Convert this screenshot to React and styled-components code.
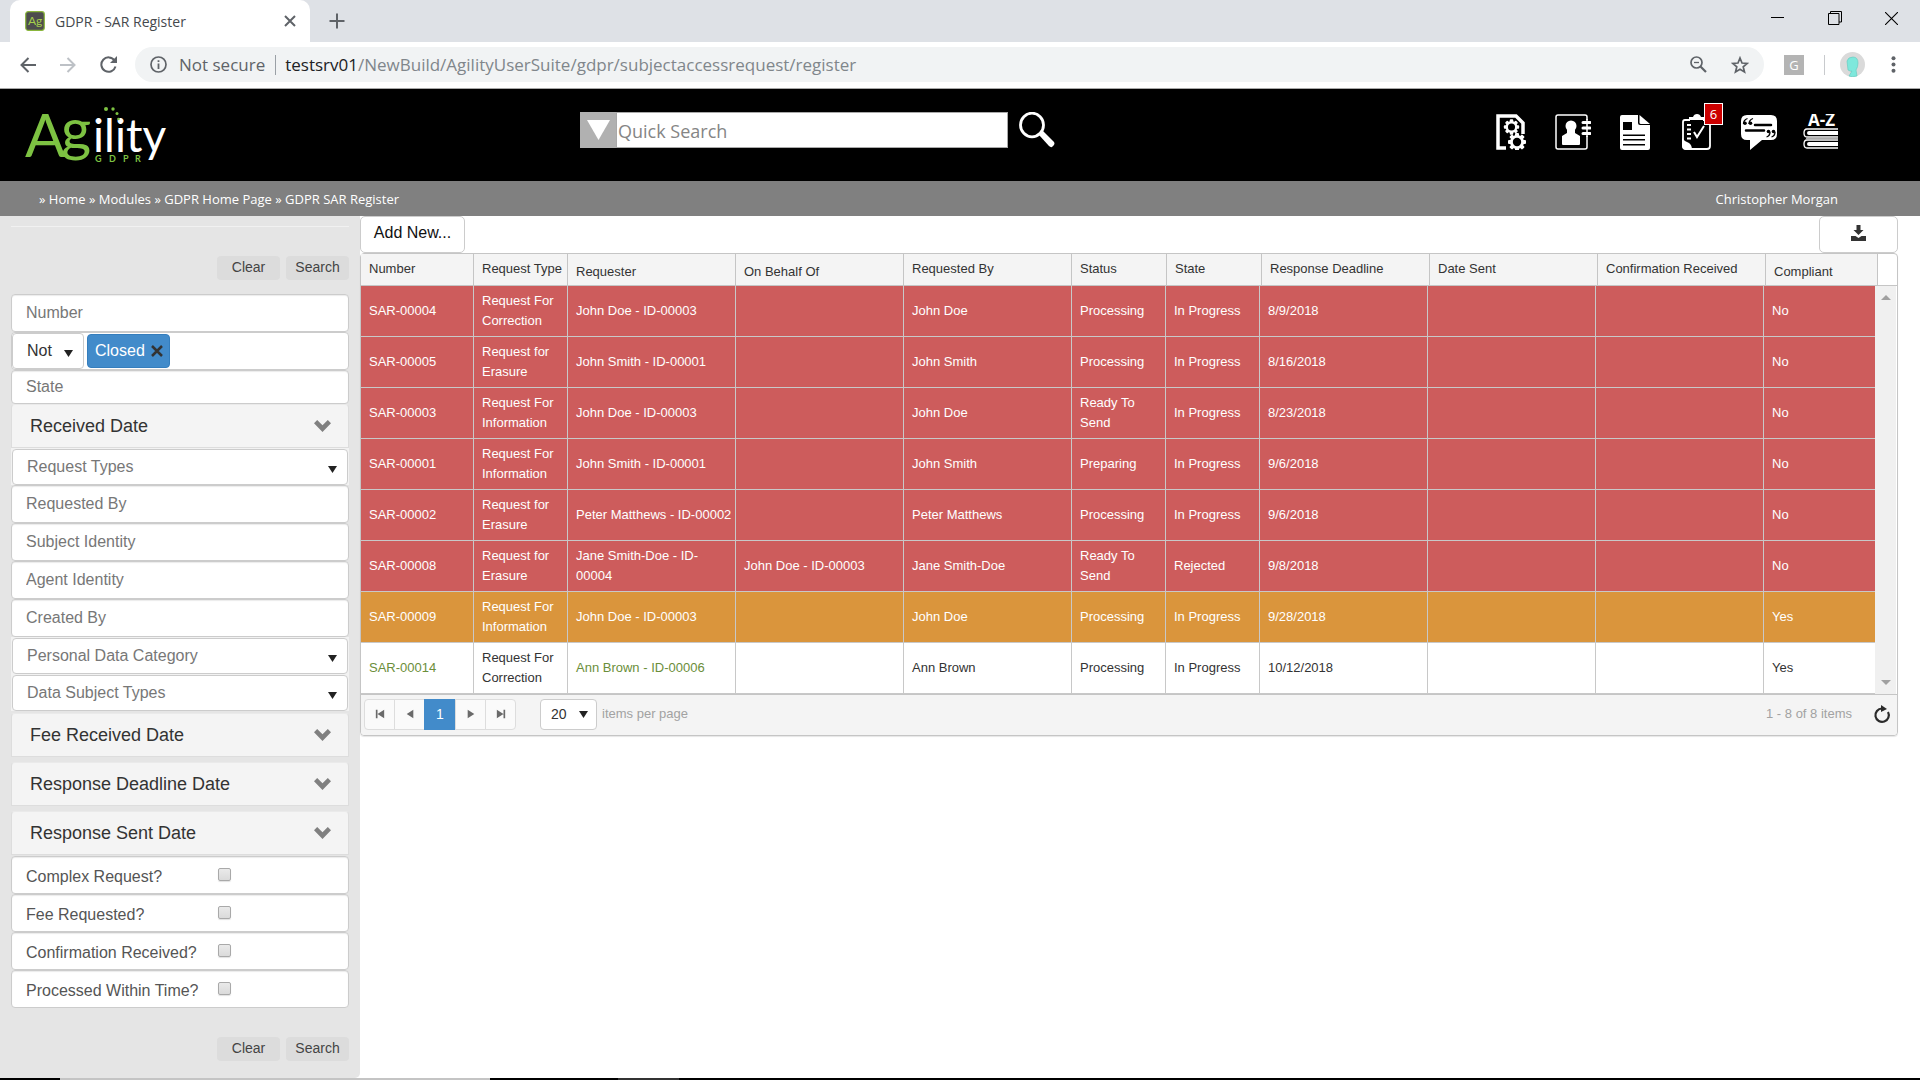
import React from "react";
import styled, { createGlobalStyle } from "styled-components";

const ui = `"Open Sans", "Noto Sans", sans-serif`;
const arial = `"Liberation Sans", Arial, sans-serif`;

const GlobalStyle = createGlobalStyle`
  *, *::before, *::after { box-sizing: border-box; }
  html, body { margin: 0; height: 100%; background: #fff; }
  #root { min-height: 100%; display: flex; flex-direction: column; }
  body { font-family: ${arial}; color: #333; overflow: hidden; }
  button, input, select { font: inherit; color: inherit; }
  button { cursor: pointer; }
  a { color: inherit; text-decoration: none; }
  svg { display: block; flex: none; }
`;

const Page = styled.div`
  min-height: 100vh;
  display: flex;
  flex-direction: column;
`;

/* ---------- browser frame ---------- */
const TabStrip = styled.div`
  display: flex;
  align-items: stretch;
  height: 42px;
  padding-left: 10px;
  background: #dee1e6;
  font-family: ${ui};
`;
const Tab = styled.div`
  display: flex;
  align-items: center;
  width: 300px;
  padding: 0 14px 0 15px;
  background: #fff;
  border-radius: 10px 10px 0 0;
  font-size: 14px;
  color: #45494d;
`;
const TabTitle = styled.span`
  flex: 1;
  padding-left: 10px;
`;
const IconButton = styled.button`
  display: flex;
  align-items: center;
  justify-content: center;
  width: ${(p) => p.$w || 40}px;
  height: ${(p) => p.$h || 36}px;
  padding: 0;
  border: 0;
  background: transparent;
`;
const NewTab = styled(IconButton)`
  height: 42px;
  margin-left: 7px;
`;
const WindowButtons = styled.div`
  display: flex;
  margin-left: auto;
`;
const Toolbar = styled.div`
  display: flex;
  align-items: center;
  height: 47px;
  padding: 0 7px 1px 8px;
  background: #fff;
  border-bottom: 1px solid #a8a8a8;
  font-family: ${ui};
`;
const AddressBar = styled.div`
  display: flex;
  align-items: center;
  flex: 1;
  height: 35px;
  margin: 0 9px 0 7px;
  padding: 0 3px 0 15px;
  border-radius: 18px;
  background: #f1f3f4;
  font-size: 17px;
  color: #5f6368;
`;
const Secure = styled.span`
  margin-left: 12px;
  padding-right: 10px;
  border-right: 1px solid #9aa0a6;
  line-height: 20px;
`;
const Url = styled.span`
  flex: 1;
  padding-left: 9px;
  color: #80868b;
  b { font-weight: 400; color: #202124; }
`;
const Extension = styled.span`
  width: 20px;
  margin: 0 20px 0 11px;
  background: #b4b4b4;
  color: #fff;
  font-size: 13px;
  line-height: 20px;
  text-align: center;
`;
const Profile = styled.div`
  display: flex;
  align-items: center;
  height: 20px;
  padding: 0 8px 0 15px;
  border-left: 1px solid #c8cacd;
`;

/* ---------- application header ---------- */
const Banner = styled.header`
  display: grid;
  grid-template-columns: 580px 1fr auto;
  align-items: start;
  height: 92px;
  padding-right: 81px;
  background: #000;
  font-family: ${ui};
`;
const LogoLink = styled.a`
  display: block;
  padding: 8px 0 0 20px;
`;
const QuickSearch = styled.form`
  display: flex;
  align-items: center;
  padding-top: 23px;
`;
const ScopeButton = styled.button`
  display: flex;
  align-items: center;
  justify-content: center;
  width: 36px;
  height: 36px;
  padding: 0;
  border: 0;
  background: #b1b1b1;
`;
const QuickInput = styled.input`
  width: 392px;
  height: 36px;
  padding: 2px 0 0 1px;
  border: 1px solid #a9a9a9;
  background: #fff;
  font-size: 18px;
  &::placeholder { color: #858585; opacity: 1; }
`;
const SearchButton = styled(IconButton)`
  width: 36px;
  margin-left: 11px;
`;
const ModuleNav = styled.nav`
  display: flex;
  gap: 26px;
  padding-top: 25px;
`;
const ModuleLink = styled.a`
  position: relative;
  display: block;
  width: 36px;
  height: 36px;
`;
const Badge = styled.span`
  position: absolute;
  top: -11px;
  right: -8px;
  width: 19px;
  height: 22px;
  border: 1px solid #fff;
  background: #c00;
  color: #fff;
  font-size: 13px;
  line-height: 20px;
  text-align: center;
`;
const CrumbBar = styled.div`
  display: flex;
  align-items: center;
  justify-content: space-between;
  height: 35px;
  padding: 0 82px 0 39px;
  background: #808080;
  color: #fff;
  font-family: ${ui};
  font-size: 13px;
`;

/* ---------- filter panel ---------- */
const Body = styled.main`
  display: flex;
  flex: 1;
  align-items: stretch;
`;
const Filters = styled.aside`
  width: 360px;
  flex: none;
  padding: 10px 11px 0;
  background: #e5e5e5;
  border-radius: 0 0 5px 0;
`;
const Actions = styled.div`
  display: flex;
  justify-content: flex-end;
  gap: 6px;
  padding: ${(p) => (p.$top ? "29px 0 14px" : "28px 0 0")};
  border-top: 1px solid ${(p) => (p.$top ? "#f1f1f1" : "transparent")};
`;
const ActionButton = styled.button`
  width: 63px;
  height: 24px;
  padding: 0 0 2px;
  border: 0;
  border-radius: 4px;
  background: #dcdcdc;
  color: #444;
  font-size: 14px;
`;
const Field = styled.input`
  display: block;
  width: 100%;
  height: ${(p) => (p.$short ? 34 : 38)}px;
  padding: 0 14px;
  border: 1px solid #ccc;
  border-radius: 4px;
  background: #fff;
  box-shadow: inset 0 1px 1px rgba(0, 0, 0, 0.08);
  font-size: 16px;
  &::placeholder { color: #777; opacity: 1; }
`;
const TokenBox = styled.div`
  display: flex;
  align-items: center;
  height: 38px;
  border: 1px solid #ccc;
  border-radius: 4px;
  background: #fff;
  font-size: 16px;
`;
const SelectFrame = styled.div`
  position: relative;
  flex: none;
  width: ${(p) => p.$w || "100%"};
  padding: ${(p) => p.$pad || "1px 1px 0"};
  background: ${(p) => (p.$pad ? "none" : "#f2f2f2")};
  svg {
    position: absolute;
    right: ${(p) => p.$arrow || 12}px;
    top: calc(50% - ${(p) => (p.$mid ? 3 : 1)}px);
    pointer-events: none;
  }
`;
const Select = styled.select`
  display: block;
  appearance: none;
  width: 100%;
  height: ${(p) => p.$h || 36}px;
  padding: 0 ${(p) => p.$inset || 14}px 1px;
  border: 1px solid #ccc;
  border-radius: 4px;
  background: #fff;
  color: ${(p) => (p.$dark ? "#333" : "#777")};
  font-size: ${(p) => p.$size || 16}px;
`;
const Token = styled.span`
  display: flex;
  align-items: center;
  gap: 6px;
  height: 34px;
  margin-left: 2px;
  padding: 0 6px 0 7px;
  border: 1px solid #357ebd;
  border-radius: 4px;
  background: #428bca;
  color: #fff;
`;
const TokenInput = styled.input`
  flex: 1;
  min-width: 0;
  height: 34px;
  border: 0;
  background: transparent;
`;
const Panels = styled.div`
  display: grid;
  gap: 5px;
  padding: 2px 0 1px;
`;
const PanelToggle = styled.button`
  display: flex;
  align-items: center;
  justify-content: space-between;
  width: 100%;
  height: 44px;
  padding: 0 17px 0 18px;
  border: 1px solid #ddd;
  border-top-color: #eaeaea;
  border-radius: 4px 4px 0 0;
  background: #f4f4f4;
  color: #333;
  font-size: 18px;
`;
const CheckRow = styled.label`
  display: grid;
  grid-template-columns: 192px 1fr;
  align-items: center;
  height: 38px;
  padding: 3px 14px 0;
  border: 1px solid #ccc;
  border-radius: 4px;
  background: #fff;
  box-shadow: inset 0 1px 1px rgba(0, 0, 0, 0.08);
  color: #555;
  font-size: 16px;
`;
const Check = styled.input`
  appearance: none;
  width: 13px;
  height: 13px;
  margin: 0 0 4px;
  border: 1px solid #a9a9a9;
  border-radius: 2px;
  background: linear-gradient(#eaeaea, #dadada);
  box-shadow: 0 1px 1px rgba(0, 0, 0, 0.12);
`;

/* ---------- grid ---------- */
const Content = styled.section`
  flex: 1;
  min-width: 0;
  padding-right: 22px;
`;
const GridTools = styled.div`
  display: flex;
  justify-content: space-between;
  height: 37px;
`;
const ToolButton = styled.button`
  display: flex;
  align-items: center;
  justify-content: center;
  min-width: ${(p) => p.$w}px;
  height: 37px;
  padding: 0 0 3px;
  border: 1px solid #ccc;
  border-radius: 5px;
  background: #fff;
  color: #111;
  font-size: 16px;
`;
const Grid = styled.div`
  border: 1px solid #c5c5c5;
  border-radius: 4px;
  box-shadow: 0 1px 1px rgba(0, 0, 0, 0.1);
  font-size: 13px;
  line-height: 20px;
`;
const HeadWrap = styled.div`
  padding-right: 19px;
  border-bottom: 1px solid #c5c5c5;
`;
const ScrollWrap = styled.div`
  display: flex;
  padding-right: 1px;
  border-bottom: 1px solid #c5c5c5;
`;
const Table = styled.table`
  width: 100%;
  flex: 1;
  table-layout: fixed;
  border-collapse: separate;
  border-spacing: 0;
`;
const Th = styled.th`
  height: 31px;
  padding: ${(p) => (p.$plain ? "8px 0 3px 8px" : "5px 0 6px 8px")};
  border-left: 1px solid #c5c5c5;
  background: #f4f4f4;
  font-weight: 400;
  text-align: left;
  white-space: nowrap;
  &:first-child { border-left: 0; }
  &:last-child { border-right: 1px solid #c5c5c5; }
`;
const Tr = styled.tr`
  background: ${(p) => ({ late: "#cd5c5c", soon: "#da953c", ok: "#fff" })[p.$tone]};
  color: ${(p) => (p.$tone === "ok" ? "#333" : "#fff")};
  a { color: ${(p) => (p.$tone === "ok" ? "#6b8e3a" : "#fff")}; }
`;
const Td = styled.td`
  height: 51px;
  padding: 5px 2px 5px 8px;
  border-left: 1px solid #c8c8c8;
  border-bottom: 1px solid #c8c8c8;
  vertical-align: middle;
  &:first-child { border-left: 0; }
`;
const ScrollBar = styled.div`
  display: flex;
  flex-direction: column;
  justify-content: space-between;
  align-items: center;
  width: 21px;
  padding: 9px 0;
  background: #f0f0f0;
`;
const Pager = styled.div`
  display: flex;
  align-items: center;
  height: 40px;
  padding: 0 5px 2px 3px;
  background: #f4f4f4;
  border-radius: 0 0 4px 4px;
  color: #a2a2a2;
`;
const PageButtons = styled.div`
  display: flex;
  margin-right: 24px;
`;
const PageButton = styled.button`
  display: flex;
  align-items: center;
  justify-content: center;
  width: ${(p) => (p.$on ? 32 : 31)}px;
  height: 31px;
  padding: 0;
  border: 1px solid ${(p) => (p.$on ? "#428bca" : "#ddd")};
  margin-left: -1px;
  background: ${(p) => (p.$on ? "#428bca" : "#fafafa")};
  color: #fff;
  font-size: 14px;
  &:first-child { border-radius: 4px 0 0 4px; margin-left: 0; }
  &:last-child { border-radius: 0 4px 4px 0; }
`;
const PageSizeLabel = styled.label`
  padding-left: 5px;
`;
const Total = styled.span`
  margin-left: auto;
  padding-right: 20px;
`;
const TaskbarEdge = styled.footer`
  display: grid;
  grid-template-columns: 60px 430px 128px 61px 1fr;
  height: 2px;
  background: #000;
  span:nth-child(2) { background: #c4c4c4; }
  span:nth-child(4) { background: #333; }
`;

/* ---------- drawings ---------- */
const Caret = ({ w = 9, h = 7, c = "#222", up }) => (
  <svg width={w} height={h} viewBox="0 0 10 8" preserveAspectRatio="none" aria-hidden="true">
    <path d={up ? "M0 8 5 0l5 8z" : "M0 0h10L5 8z"} fill={c} />
  </svg>
);
const Chevron = () => (
  <svg width="17" height="12" viewBox="0 0 17 12" aria-hidden="true">
    <path d="M3.2 0 8.5 5.2 13.8 0 17 3.2 8.5 12 0 3.2z" fill="#808080" />
  </svg>
);
const Favicon = () => (
  <svg width="20" height="20" viewBox="0 0 20 20" aria-hidden="true">
    <rect x="0.7" y="0.7" width="18.6" height="18.6" rx="2.5" fill="#4d4d4d" stroke="#8ab63c" strokeWidth="1.2" />
    <text x="3" y="13.500" fontFamily="Lato" fontSize="12" fill="#a4d04a">Ag</text>
  </svg>
);
const Logo = () => (
  <svg width="160" height="82" viewBox="20 97 160 82" role="img" aria-label="Agility GDPR">
    <text fontFamily="Lato, sans-serif" fill="#7dc242">
      <tspan x="25" y="157" fontSize="60">A</tspan>
      <tspan x="61" y="150" fontSize="58">g</tspan>
      <tspan x="93" y="152" fontSize="46" fill="#fff">ility</tspan>
    </text>
    <text x="95 109 123 135" y="162" fontFamily="Lato, sans-serif" fontSize="9" fontWeight="700" fill="#7dc242">GDPR</text>
    <g fill="#7dc242">
      <circle cx="106" cy="109" r="2" />
      <circle cx="113" cy="109" r="1.7" />
      <circle cx="117" cy="113.500" r="1.500" />
      <circle cx="118.500" cy="119" r="1.300" />
    </g>
  </svg>
);

const Gear = ({ x, y, s = 1 }) => (
  <g transform={`translate(${x} ${y}) scale(${s})`}>
    {[0, 45, 90, 135].map((a) => (
      <rect key={a} x="-2" y="-9" width="4" height="18" rx="1" transform={`rotate(${a})`} fill="#fff" />
    ))}
    <circle r="7" fill="#fff" />
    <circle r="4.200" fill="#000" />
  </g>
);
const moduleIcons = {
  settings: (
    <>
      <path d="M13 34H5V2h18l7 7v11" fill="none" stroke="#fff" strokeWidth="3.500" />
      <Gear x="18.500" y="13" s="0.85" />
      <Gear x="24" y="28" s="1" />
    </>
  ),
  contact: (
    <>
      <rect x="1" y="1" width="31" height="34" rx="2" fill="none" stroke="#fff" strokeWidth="1.500" />
      <path d="M28 6h8v16h-8z" fill="#000" />
      <path d="M32 5v18" stroke="#fff" strokeWidth="1.500" />
      <path d="M28 8.500h7M28 14h7M28 19.500h7" stroke="#fff" strokeWidth="3" strokeLinecap="round" />
      <circle cx="16" cy="12" r="5.500" fill="#fff" />
      <path d="M12 16h8v3l5 3v8q0 1-1 1H8q-1 0-1-1v-8l5-3z" fill="#fff" />
    </>
  ),
  document: (
    <>
      <path d="M5 1h16v8q0 2 2 2h10v23q0 2-2 2H5q-2 0-2-2V3q0-2 2-2z" fill="#fff" />
      <path d="M22.500 1 33 10h-9q-1.500 0-1.500-1.500z" fill="#fff" />
      <path d="M6 8h9v8H6zM6 20.500h22v1.500H6zM6 25h22v1.500H6zM6 30h22v1.500H6z" fill="#000" />
    </>
  ),
  tasks: (
    <>
      <path d="M11 6H6Q4 6 4 8v23q0 4 4 4h20q3 0 3-3V8q0-2-2-2h-5" fill="none" stroke="#fff" strokeWidth="1.800" />
      <path d="M10 3h4q1-3 4-3t4 3h4v3H10z" fill="#fff" />
      <path d="M8 11h4M8 15.500h4M8 20h4M8 24.500h4" stroke="#fff" strokeWidth="2" />
      <path d="m15 18 3 5 7-11" fill="none" stroke="#fff" strokeWidth="2" />
      <path d="M3 24q3 4 7 5 3 2 3 7H7q-4 0-4-4z" fill="#fff" />
    </>
  ),
  quote: (
    <>
      <path d="M6 1h24q6 0 6 6v13q0 6-6 6h-9L9 36V26H6q-6 0-6-6V7q0-6 6-6z" fill="#fff" />
      <path d="M14 11h16M5 16.500h18" stroke="#000" strokeWidth="2.500" strokeLinecap="round" />
      <path d="M6.500 4.500Q2.500 6 2.500 10M12 4.500Q8 6 8 10M29 18q0 4-3.500 5M34 18q0 4-3.500 5" fill="none" stroke="#000" strokeWidth="1.300" />
      <g>
        <circle cx="4" cy="9.300" r="1.800" />
        <circle cx="9.500" cy="9.300" r="1.800" />
        <circle cx="27.500" cy="17.500" r="1.800" />
        <circle cx="32.500" cy="17.500" r="1.800" />
      </g>
    </>
  ),
  books: (
    <>
      <text x="18.500" y="12" textAnchor="middle" fontFamily="Open Sans" fontSize="17" fontWeight="700" fill="#fff">A-Z</text>
      <path d="M35 15H4q-3 0-3 4t3 4h31" fill="none" stroke="#fff" strokeWidth="1.300" />
      <path d="M35 26H4q-3 0-3 4t3 4h31" fill="none" stroke="#fff" strokeWidth="1.300" />
      <path d="M35 17H6q-2 0-2 2t2 2h29zM35 28H6q-2 0-2 2t2 2h29z" fill="#fff" />
      <path d="M3 24.500h32" stroke="#aaa" strokeWidth="1.500" />
    </>
  ),
};
const modules = [
  ["settings", "Settings"],
  ["contact", "Contacts"],
  ["document", "Documents"],
  ["tasks", "Tasks", 6],
  ["quote", "Messages"],
  ["books", "Glossary"],
];

const pagerIcons = {
  first: "M1 1h2v10H1zM11 1v10L3 6z",
  prev: "M10 1v10L2 6z",
  next: "M2 1v10l8-5z",
  last: "M9 1h2v10H9zM1 1v10l8-5z",
};
const PageIcon = ({ name }) => (
  <svg width="10" height="10" viewBox="0 0 12 12" aria-hidden="true">
    <path d={pagerIcons[name]} fill="#6a6a6a" />
  </svg>
);

/* ---------- data ---------- */
const columns = [
  ["Number", 112, 112],
  ["Request Type", 94, 94],
  ["Requester", 168, 168, true],
  ["On Behalf Of", 168, 168, true],
  ["Requested By", 168, 168],
  ["Status", 95, 94],
  ["State", 95, 94],
  ["Response Deadline", 168, 168],
  ["Date Sent", 168, 168],
  ["Confirmation Received", 168, 168],
  ["Compliant", 113, 112, true],
];
const rows = [
  ["late", "SAR-00004", "Request For Correction", "John Doe - ID-00003", "", "John Doe", "Processing", "In Progress", "8/9/2018", "", "", "No"],
  ["late", "SAR-00005", "Request for Erasure", "John Smith - ID-00001", "", "John Smith", "Processing", "In Progress", "8/16/2018", "", "", "No"],
  ["late", "SAR-00003", "Request For Information", "John Doe - ID-00003", "", "John Doe", "Ready To Send", "In Progress", "8/23/2018", "", "", "No"],
  ["late", "SAR-00001", "Request For Information", "John Smith - ID-00001", "", "John Smith", "Preparing", "In Progress", "9/6/2018", "", "", "No"],
  ["late", "SAR-00002", "Request for Erasure", "Peter Matthews - ID-00002", "", "Peter Matthews", "Processing", "In Progress", "9/6/2018", "", "", "No"],
  ["late", "SAR-00008", "Request for Erasure", "Jane Smith-Doe - ID-00004", "John Doe - ID-00003", "Jane Smith-Doe", "Ready To Send", "Rejected", "9/8/2018", "", "", "No"],
  ["soon", "SAR-00009", "Request For Information", "John Doe - ID-00003", "", "John Doe", "Processing", "In Progress", "9/28/2018", "", "", "Yes"],
  ["ok", "SAR-00014", "Request For Correction", "Ann Brown - ID-00006", "", "Ann Brown", "Processing", "In Progress", "10/12/2018", "", "", "Yes"],
];

const FilterSelect = ({ label }) => (
  <SelectFrame>
    <Select aria-label={label}>
      <option>{label}</option>
    </Select>
    <Caret w={9} h={7} />
  </SelectFrame>
);
const Panel = ({ title }) => (
  <PanelToggle type="button" aria-expanded="false">
    {title}
    <Chevron />
  </PanelToggle>
);
const ActionPair = ({ top }) => (
  <Actions $top={top}>
    <ActionButton type="button">Clear</ActionButton>
    <ActionButton type="button">Search</ActionButton>
  </Actions>
);

export default function App() {
  return (
    <Page>
      <GlobalStyle />
      <TabStrip>
        <Tab>
          <Favicon />
          <TabTitle>GDPR - SAR Register</TabTitle>
          <IconButton $w={12} aria-label="Close tab">
            <svg width="12" height="12" viewBox="0 0 12 12"><path d="m1 1 10 10M11 1 1 11" stroke="#5f6368" strokeWidth="2" /></svg>
          </IconButton>
        </Tab>
        <NewTab aria-label="New tab">
          <svg width="16" height="16" viewBox="0 0 16 16"><path d="M8 0.500v15M0.500 8h15" stroke="#5f6368" strokeWidth="2" /></svg>
        </NewTab>
        <WindowButtons>
          <IconButton $w={57} aria-label="Minimize">
            <svg width="13" height="13" viewBox="0 0 13 13"><path d="M0 5.500h13" stroke="#000" /></svg>
          </IconButton>
          <IconButton $w={57} aria-label="Restore">
            <svg width="14" height="14" viewBox="0 0 14 14"><path d="M.5 2.500h10.500v11H.5zM2.500 2.500V.5h11v10.500H11" fill="none" stroke="#000" /></svg>
          </IconButton>
          <IconButton $w={57} aria-label="Close">
            <svg width="13" height="13" viewBox="0 0 13 13"><path d="m0 0 13 13M13 0 0 13" stroke="#000" strokeWidth="1.100" /></svg>
          </IconButton>
        </WindowButtons>
      </TabStrip>

      <Toolbar>
        <IconButton aria-label="Back">
          <svg width="16" height="16" viewBox="0 0 16 16" fill="none" stroke="#5f6368" strokeWidth="2"><path d="M16 8H1.500M8.500 1l-7 7 7 7" /></svg>
        </IconButton>
        <IconButton aria-label="Forward">
          <svg width="16" height="16" viewBox="0 0 16 16" fill="none" stroke="#bdc1c6" strokeWidth="2"><path d="M0 8h14.500M7.500 1l7 7-7 7" /></svg>
        </IconButton>
        <IconButton aria-label="Reload">
          <svg width="17" height="17" viewBox="0 0 17 17"><path d="M14.500 4.500A7.200 7.200 0 1 0 15.500 10.500" fill="none" stroke="#5f6368" strokeWidth="2" /><path d="M17 0v7h-7z" fill="#5f6368" /></svg>
        </IconButton>
        <AddressBar>
          <svg width="17" height="17" viewBox="0 0 17 17"><circle cx="8.500" cy="8.500" r="7.500" fill="none" stroke="#5f6368" strokeWidth="1.700" /><path d="M7.600 7.500h1.800V13H7.600zM7.600 4.300h1.800v1.800H7.600z" fill="#5f6368" /></svg>
          <Secure>Not secure</Secure>
          <Url><b>testsrv01</b>/NewBuild/AgilityUserSuite/gdpr/subjectaccessrequest/register</Url>
          <IconButton $w={42} $h={35} aria-label="Zoom">
            <svg width="17" height="17" viewBox="0 0 17 17" fill="none" stroke="#5f6368"><circle cx="6.500" cy="6.500" r="5.500" strokeWidth="1.700" /><path d="m10.500 10.500 5.500 5.500" strokeWidth="2.200" /><path d="M4 6.500h5" strokeWidth="1.300" /></svg>
          </IconButton>
          <IconButton $w={42} $h={35} aria-label="Bookmark">
            <svg width="18" height="18" viewBox="0 0 18 18"><path d="m9 2 2 5 5.200.4-4 3.400 1.300 5.200L9 13.200 4.500 16l1.300-5.200-4-3.400L7 7z" fill="none" stroke="#5f6368" strokeWidth="1.700" /></svg>
          </IconButton>
        </AddressBar>
        <Extension>G</Extension>
        <Profile>
          <svg width="25" height="25" viewBox="0 0 25 25"><circle cx="12.500" cy="12.500" r="12.500" fill="#dadada" /><path d="M7 9q1-4 6-4 5 0 5 6 0 4-2 7l1 6q-5 1.500-8 0l3-5q-1 1-4-1z" fill="#7ee8dc" stroke="#5fc9bd" strokeWidth=".6" /></svg>
        </Profile>
        <IconButton $w={40} aria-label="Menu">
          <svg width="5" height="17" viewBox="0 0 5 17" fill="#5f6368"><circle cx="2.500" cy="2.200" r="2" /><circle cx="2.500" cy="8.500" r="2" /><circle cx="2.500" cy="14.800" r="2" /></svg>
        </IconButton>
      </Toolbar>

      <Banner>
        <LogoLink href="#home"><Logo /></LogoLink>
        <QuickSearch onSubmit={(e) => e.preventDefault()}>
          <ScopeButton type="button" aria-label="Search scope"><Caret w={23} h={20} c="#fff" /></ScopeButton>
          <QuickInput aria-label="Quick Search" placeholder="Quick Search" />
          <SearchButton aria-label="Search">
            <svg width="36" height="36" viewBox="0 0 36 36"><ellipse cx="13" cy="13" rx="11.500" ry="11.800" fill="none" stroke="#fff" strokeWidth="2.800" /><path d="m21 21 3-2 11 11q1 1 0 3l-2 2q-1.500.5-3-1L20 23z" fill="#fff" /></svg>
          </SearchButton>
        </QuickSearch>
        <ModuleNav>
          {modules.map(([id, label, count]) => (
            <ModuleLink key={id} href={`#${id}`} aria-label={label}>
              <svg width="36" height="36" viewBox="0 0 36 36">{moduleIcons[id]}</svg>
              {count && <Badge>{count}</Badge>}
            </ModuleLink>
          ))}
        </ModuleNav>
      </Banner>
      <CrumbBar>
        <nav>» <a href="#home">Home</a> » <a href="#modules">Modules</a> » <a href="#gdpr">GDPR Home Page</a> » <a href="#register">GDPR SAR Register</a></nav>
        <span>Christopher Morgan</span>
      </CrumbBar>

      <Body>
        <Filters>
          <ActionPair top />
          <Field placeholder="Number" aria-label="Number" />
          <TokenBox>
            <SelectFrame $w="73px" $pad="0 1px 0 0" $arrow={12}>
              <Select $dark aria-label="Status condition"><option>Not</option></Select>
              <Caret w={9} h={7} />
            </SelectFrame>
            <Token>
              Closed
              <IconButton $w={12} $h={20} type="button" aria-label="Remove Closed">
                <svg width="12" height="12" viewBox="0 0 12 12"><path d="m1 1 10 10M11 1 1 11" stroke="#333" strokeWidth="2.500" /></svg>
              </IconButton>
            </Token>
            <TokenInput aria-label="Status" />
          </TokenBox>
          <Field $short placeholder="State" aria-label="State" />
          <Panel title="Received Date" />
          <FilterSelect label="Request Types" />
          {["Requested By", "Subject Identity", "Agent Identity", "Created By"].map((t) => (
            <Field key={t} placeholder={t} aria-label={t} />
          ))}
          <FilterSelect label="Personal Data Category" />
          <FilterSelect label="Data Subject Types" />
          <Panels>
            <Panel title="Fee Received Date" />
            <Panel title="Response Deadline Date" />
            <Panel title="Response Sent Date" />
          </Panels>
          {["Complex Request?", "Fee Requested?", "Confirmation Received?", "Processed Within Time?"].map((t) => (
            <CheckRow key={t}>
              {t}
              <Check type="checkbox" />
            </CheckRow>
          ))}
          <ActionPair />
        </Filters>

        <Content>
          <GridTools>
            <ToolButton type="button" $w={105}>Add New...</ToolButton>
            <ToolButton type="button" $w={79} aria-label="Export">
              <svg width="15" height="16" viewBox="0 0 15 16"><path d="M5.500 0h4v5h3l-5 5-5-5h3zM0 11h4.500l3 2 3-2H15v5H0z" fill="#333" /></svg>
            </ToolButton>
          </GridTools>
          <Grid>
            <HeadWrap>
              <Table role="presentation">
                <colgroup>{columns.map((c) => <col key={c[0]} width={c[1]} />)}</colgroup>
                <thead>
                  <tr>{columns.map((c) => <Th key={c[0]} scope="col" $plain={c[3]}>{c[0]}</Th>)}</tr>
                </thead>
              </Table>
            </HeadWrap>
            <ScrollWrap>
              <Table aria-label="GDPR SAR Register">
                <colgroup>{columns.map((c) => <col key={c[0]} width={c[2]} />)}</colgroup>
                <tbody>
                  {rows.map(([tone, ...cells]) => (
                    <Tr key={cells[0]} $tone={tone}>
                      {cells.map((v, i) => (
                        <Td key={i}>{v && (i === 0 || i === 2 || i === 3) ? <a href={`#${v}`}>{v}</a> : v}</Td>
                      ))}
                    </Tr>
                  ))}
                </tbody>
              </Table>
              <ScrollBar>
                <Caret up w={10} h={5} c="#a0a0a0" />
                <Caret w={10} h={5} c="#a0a0a0" />
              </ScrollBar>
            </ScrollWrap>
            <Pager>
              <PageButtons>
                <PageButton aria-label="First page"><PageIcon name="first" /></PageButton>
                <PageButton aria-label="Previous page"><PageIcon name="prev" /></PageButton>
                <PageButton $on aria-current="page">1</PageButton>
                <PageButton aria-label="Next page"><PageIcon name="next" /></PageButton>
                <PageButton aria-label="Last page"><PageIcon name="last" /></PageButton>
              </PageButtons>
              <SelectFrame $w="57px" $pad="0" $arrow={9} $mid>
                <Select id="page-size" $dark $h={31} $size={14} $inset={10}><option>20</option></Select>
                <Caret w={9} h={7} />
              </SelectFrame>
              <PageSizeLabel htmlFor="page-size">items per page</PageSizeLabel>
              <Total>1 - 8 of 8 items</Total>
              <IconButton $w={20} $h={24} aria-label="Refresh">
                <svg width="18" height="19" viewBox="0 0 18 19"><path d="M9 3.500a6.700 6.700 0 1 0 6 3.500" fill="none" stroke="#2b2b2b" strokeWidth="2.200" /><path d="M8 0v7l6-3z" fill="#2b2b2b" /></svg>
              </IconButton>
            </Pager>
          </Grid>
        </Content>
      </Body>
      <TaskbarEdge><span /><span /><span /><span /><span /></TaskbarEdge>
    </Page>
  );
}
